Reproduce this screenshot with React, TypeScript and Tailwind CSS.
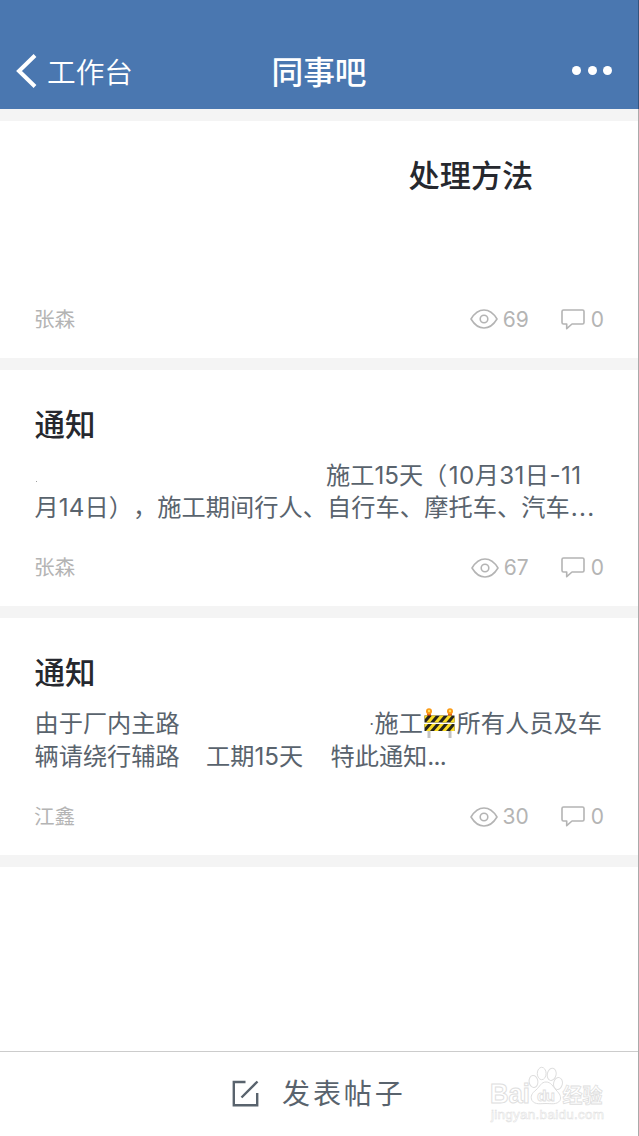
import React from "react";

const latin = "font-['Inter','Noto_Sans_CJK_SC',sans-serif]";

function EyeIcon() {
  return (
    <svg width="28" height="20" viewBox="0 0 28 20" fill="none" stroke="#b4b4b4" strokeWidth="1.6">
      <path d="M1 10C4.500 4.200 9 1 14 1s9.500 3.200 13 9c-3.500 5.800-8 9-13 9S4.500 15.800 1 10Z" strokeLinejoin="round" />
      <circle cx="14" cy="10" r="3.800" />
    </svg>
  );
}

function CommentIcon() {
  return (
    <svg width="24" height="21" viewBox="0 0 24 21" fill="none" stroke="#b4b4b4" strokeWidth="1.6" strokeLinejoin="round">
      <path d="M2.500 1h19Q23 1 23 2.500v11Q23 15 21.500 15H11l-5.300 4.700V15H2.500Q1 15 1 13.500v-11Q1 1 2.500 1Z" />
    </svg>
  );
}

function BarrierIcon() {
  return (
    <svg width="31" height="30" viewBox="0 0 31 30">
      <path d="M3.500 20h3v10h-3zM24.500 20h3v10h-3z" fill="#c3c3c3" />
      <path d="M3 5h4v4H3zM24 5h4v4h-4z" fill="#ef5b20" />
      <circle cx="5" cy="3.200" r="3" fill="#fb9a16" />
      <circle cx="26" cy="3.200" r="3" fill="#fb9a16" />
      <circle cx="5" cy="3" r="1.200" fill="#ffe45c" />
      <circle cx="26" cy="3" r="1.200" fill="#ffe45c" />
      <path d="M0.500 7.500h30v7h-30zM0.500 16h30v7h-30z" fill="#25231d" />
      <path
        d="M.5 7.500H4L.5 11.500zM8 7.500h4l-6 7H2zM16 7.500h4l-6 7h-4zM24 7.500h4l-6 7h-4zM30.500 9V14L30 14.500h-4zM.5 16H4L.5 20zM8 16h4l-6 7H2zM16 16h4l-6 7h-4zM24 16h4l-6 7h-4zM30.500 17.500V23H26z"
        fill="#fbdc22"
      />
    </svg>
  );
}

function Meta({ author, views }: { author: string; views: number }) {
  return (
    <div className="absolute inset-x-0 bottom-[26.500px] flex h-6 items-center pr-[35px] pl-[34px] text-[21px] leading-6 text-[#b4b4b4]">
      <span className="pb-[3px] text-[20.600px]">{author}</span>
      <span className="ml-auto flex items-center">
        <EyeIcon />
        <span className={`ml-[5px] pt-px ${latin}`}>{views}</span>
      </span>
      <span className="ml-8 flex items-center">
        <CommentIcon />
        <span className={`ml-[6px] pt-px ${latin}`}>0</span>
      </span>
    </div>
  );
}

function Post({ title, titleClass, author, views, children }: {
  title: string;
  titleClass: string;
  author: string;
  views: number;
  children?: React.ReactNode;
}) {
  return (
    <article className="relative h-[248.700px] shrink-0 border-b-12 border-[#f4f4f4] bg-white pt-[33px]">
      <h2 className={`h-10 leading-10 font-medium text-[#26282e] ${titleClass}`}>{title}</h2>
      <div className={`mt-[17px] pl-[34.500px] text-[24.200px] leading-[32.500px] whitespace-pre text-[#59636d] [text-spacing-trim:space-all] ${latin}`}>{children}</div>
      <Meta author={author} views={views} />
    </article>
  );
}

function Watermark() {
  return (
    <svg className="absolute top-[14px] right-[33px]" width="118" height="58" viewBox="0 0 118 58" fill="#fff" stroke="#dedede" strokeWidth="1">
      <g fontFamily="Liberation Sans, sans-serif" fontWeight="700">
        <text x="2" y="37" fontSize="27" textLength="40" lengthAdjust="spacingAndGlyphs">Bai</text>
        <ellipse cx="45.500" cy="15.500" rx="4.400" ry="6" transform="rotate(-8 45.500 15.500)" />
        <ellipse cx="53.700" cy="7.500" rx="4.400" ry="6.200" />
        <ellipse cx="63.700" cy="8.300" rx="4.400" ry="6.200" transform="rotate(12 63.700 8.300)" />
        <ellipse cx="70" cy="17.500" rx="4.400" ry="6" transform="rotate(12 70 17.500)" />
        <path d="M58 16c5 0 7 4.500 10 8 4 4 5.500 7 4 10.500-3 4.500-9 3-14 3s-11 1.500-14-3c-2-4 0-7.500 4-10.500 4-3.500 5-8 10-8Z" />
        <text x="49" y="34.500" fontSize="15.500" strokeWidth="0.800" textLength="18">du</text>
      </g>
      <text x="74.500" y="36.500" fontSize="20" strokeWidth="0.800" fontWeight="700" fontFamily="Noto Sans CJK SC, sans-serif">经验</text>
      <text x="3" y="53" fontSize="13.500" strokeWidth="0.500" textLength="113" fontFamily="Liberation Sans, sans-serif">jingyan.baidu.com</text>
    </svg>
  );
}

export default function App() {
  return (
    <div className="relative flex h-[1136px] w-[639px] flex-col overflow-hidden bg-white font-['Noto_Sans_CJK_SC',sans-serif]">
      <header className="grid h-[109px] shrink-0 grid-cols-3 items-center bg-[#4a77b0] pt-[33px] text-white">
        <div className="flex items-center pl-4">
          <svg width="21" height="34" viewBox="0 0 21 34" fill="none" stroke="currentColor" strokeWidth="4">
            <path d="M19 1.500 3 17l16 15.500" />
          </svg>
          <span className="ml-[10px] pb-px text-[28.700px] leading-10 font-[350]">工作台</span>
        </div>
        <h1 className="pr-px pb-[3px] text-center text-[31.700px] leading-10 font-medium">同事吧</h1>
        <div className="flex justify-end gap-[6.500px] pr-[27px] pb-px">
          <i className="size-[9px] rounded-full bg-white" />
          <i className="size-[9px] rounded-full bg-white" />
          <i className="size-[9px] rounded-full bg-white" />
        </div>
      </header>
      <main className="flex flex-1 flex-col border-t-12 border-[#f4f4f4]">
        <Post title="处理方法" titleClass="pl-[408.500px] text-[31.200px]" author="张森" views={69} />
        <Post title="通知" titleClass="pl-[34.500px] text-[30.500px]" author="张森" views={67}>
          <div className="flex">
            <i className="mt-[21px] ml-[1.500px] size-px bg-[#a0a0a0]" />
            <span className="ml-[289px]">施工15天（</span>
            <span className="ml-[1.500px] tracking-[0.400px]">10月31日-11</span>
          </div>
          <div className="tracking-[0.080px]">月14日），施工期间行人、自行车、摩托车、汽车<span className="ml-px tracking-[1.300px]">...</span></div>
        </Post>
        <Post title="通知" titleClass="pl-[34.500px] text-[30.500px]" author="江鑫" views={30}>
          <div className="flex">
            <span className="w-[335px]">由于厂内主路</span>
            <span className="w-[5px] overflow-hidden text-[15px]">·</span>
            <span>施工</span>
            <span className="ml-[1.500px] h-[30px]"><BarrierIcon /></span>
            <span className="ml-px tracking-[0.100px]">所有人员及车</span>
          </div>
          <div className="flex">
            <span className="w-[171.500px]">辆请绕行辅路</span>
            <span className="w-[124.500px]">工期15天</span>
            <span>特此通知<span className="tracking-[-0.700px]">...</span></span>
          </div>
        </Post>
      </main>
      <footer className="relative flex h-[85px] shrink-0 items-center border-t border-[#cccccc] text-[#59636d]">
        <div className="ml-[232px] flex items-center pb-[2px]">
          <svg width="27" height="27" viewBox="0 0 27 27" fill="none" stroke="currentColor" strokeWidth="2.400">
            <path d="M13.500 2H1.800v23.200h23.400V13M25.500 1.500 9.500 17.500" />
          </svg>
          <span className="ml-[23px] pb-[2px] text-[28px] leading-10 tracking-[2.900px]">发表帖子</span>
        </div>
        <Watermark />
      </footer>
      <div className="absolute top-0 right-0 h-[109px] w-px bg-[#34547d]" />
      <div className="absolute right-0 bottom-0 h-[1027px] w-px bg-[#aaaaaa]" />
    </div>
  );
}
